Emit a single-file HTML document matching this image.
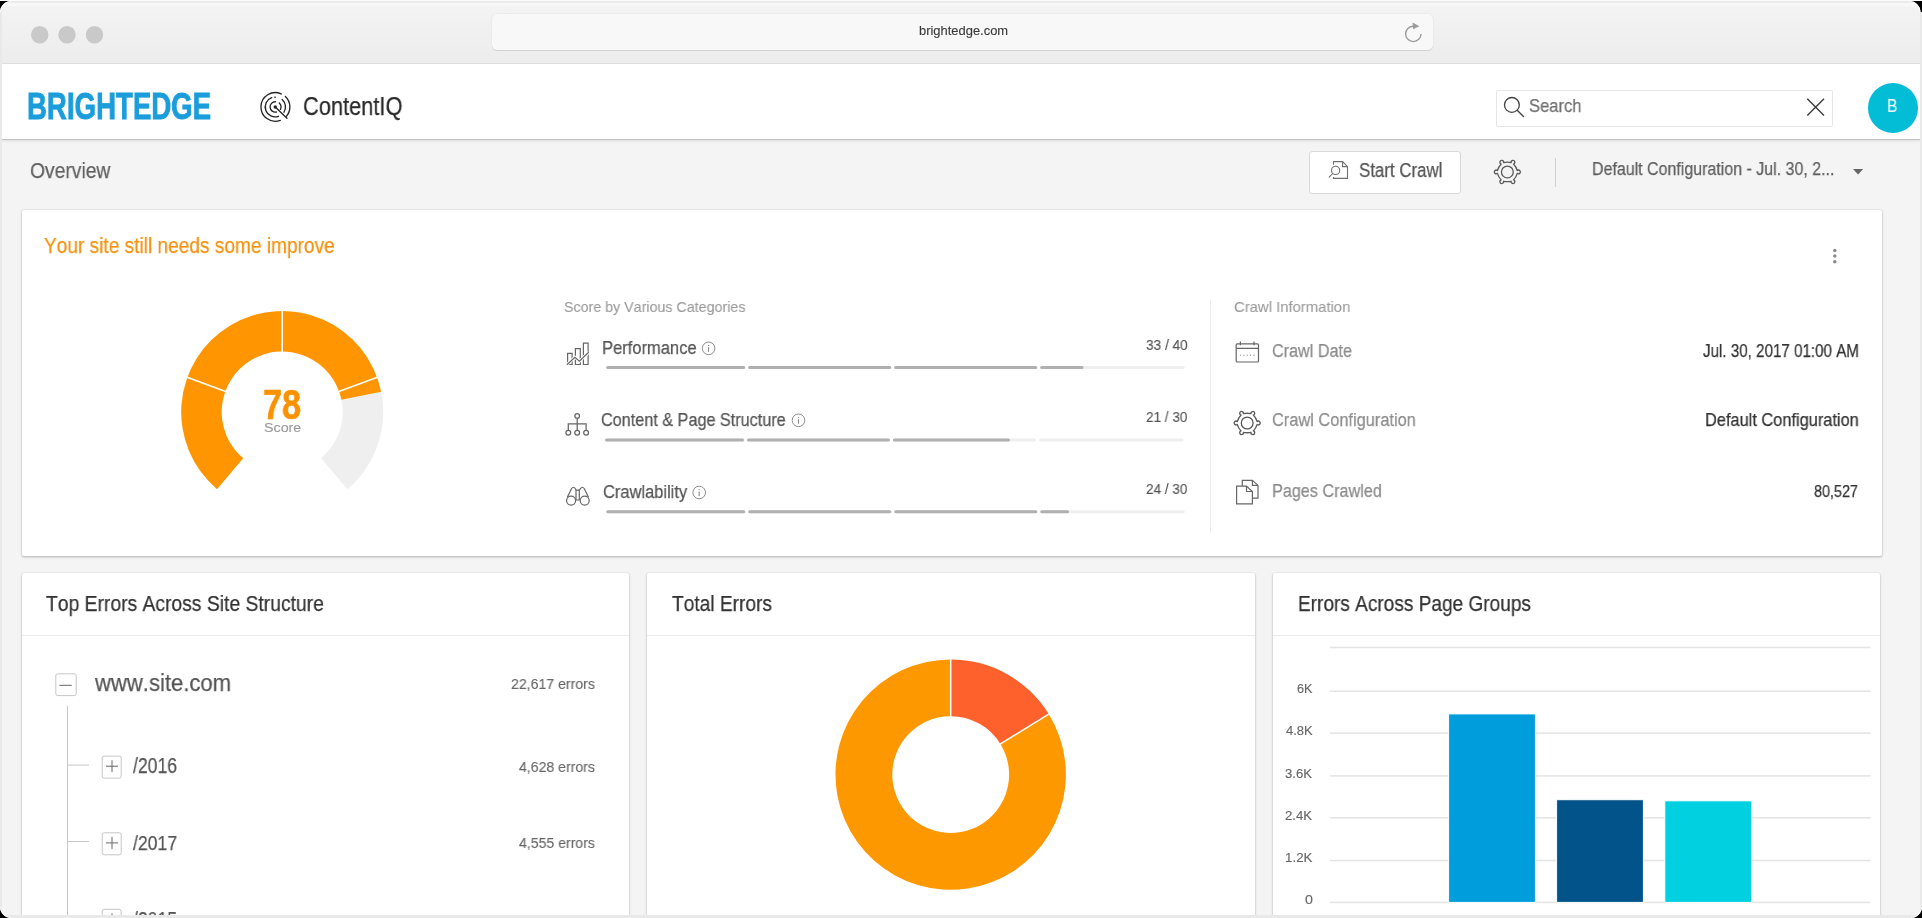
<!DOCTYPE html>
<html><head><meta charset="utf-8">
<style>
html,body{margin:0;padding:0;}
body{width:1922px;height:918px;overflow:hidden;position:relative;background:#000;font-family:"Liberation Sans",sans-serif;}
.a{position:absolute;}
.t{position:absolute;white-space:nowrap;line-height:1;transform-origin:0 0;will-change:transform;font-kerning:none;-webkit-text-stroke:0.25px currentColor;font-family:"Liberation Sans",sans-serif;}
#win{position:absolute;left:0;top:0;width:1922px;height:918px;background:#e9e9e9;overflow:hidden;}
.card{position:absolute;background:#fff;border-radius:2px;box-shadow:0 1px 2.5px rgba(0,0,0,0.26),0 0 1.5px rgba(0,0,0,0.12);}
svg{position:absolute;left:0;top:0;}
</style></head><body>
<div id="win">
  <!-- title bar -->
  <div class="a" style="left:1px;top:1px;width:1920px;height:63px;border-radius:10px 10px 0 0;background:linear-gradient(#f4f4f4,#ececec);"></div>
  <div class="a" style="left:1px;top:63px;width:1920px;height:1px;background:#dedede;"></div>
  <div class="a" style="left:0;top:1px;width:1922px;height:1.6px;background:#ebebeb;"></div>
  <div class="a" style="left:8px;top:3.2px;width:1906px;height:2.4px;background:#f8f8f8;"></div>
  <!-- url bar -->
  <div class="a" style="left:492px;top:14px;width:941px;height:36px;border-radius:5px;background:#f8f8f8;box-shadow:0 1px 0 #d2d2d2, 0 0 0 0.5px #e4e4e4;"></div>
  <!-- content bg -->
  <div class="a" style="left:2px;top:64px;width:1918px;height:851px;background:#f4f4f4;"></div>
  <!-- header -->
  <div class="a" style="left:2px;top:64px;width:1918px;height:75px;background:#fff;box-shadow:0 1px 0 #c2c2c2, 0 2px 3px rgba(0,0,0,0.10);"></div>
  <!-- search -->
  <div class="a" style="left:1496px;top:90px;width:335px;height:35px;border:1px solid #e6e6e6;border-radius:2px;background:#fff;"></div>
  <!-- avatar -->
  <div class="a" style="left:1868px;top:83.3px;width:50px;height:49.6px;border-radius:50%;background:#03bcd6;"></div>
  <!-- start crawl button -->
  <div class="a" style="left:1308.5px;top:150.5px;width:150px;height:41.5px;border:1px solid #d9d9d9;border-radius:3px;background:#fff;"></div>
  <!-- divider -->
  <div class="a" style="left:1554.5px;top:157.5px;width:1.2px;height:29.5px;background:#d0d0d0;"></div>
  <!-- cards -->
  <div class="card" style="left:22px;top:210px;width:1859.7px;height:345.6px;"></div>
  <div class="card" style="left:22px;top:573.3px;width:606.7px;height:400px;"></div>
  <div class="card" style="left:647px;top:573.3px;width:608.3px;height:400px;"></div>
  <div class="card" style="left:1273px;top:573.3px;width:607.2px;height:400px;"></div>
  <div class="a" style="left:22px;top:635px;width:606.7px;height:1px;background:#ebebeb;"></div>
  <div class="a" style="left:647px;top:635px;width:608.3px;height:1px;background:#ebebeb;"></div>
  <div class="a" style="left:1273px;top:635px;width:607.2px;height:1px;background:#ebebeb;"></div>
  <!-- card1 vertical divider -->
  <div class="a" style="left:1210.3px;top:300px;width:1px;height:233px;background:#ececec;"></div>

  <svg width="1922" height="918" viewBox="0 0 1922 918">
    <!-- traffic lights -->
    <circle cx="39.75" cy="34.75" r="8.75" fill="#c9c9c9"/>
    <circle cx="67" cy="34.75" r="8.75" fill="#c9c9c9"/>
    <circle cx="94.5" cy="34.75" r="8.75" fill="#c9c9c9"/>
    <!-- reload -->
    <path d="M1413.3 26.2 A7.7 7.7 0 1 0 1421 33.9" fill="none" stroke="#9b9b9b" stroke-width="1.4"/>
    <path d="M1412.5 22.5 L1419.4 26.2 L1413.2 29.2 Z" fill="#9b9b9b"/>
    <path d="M280.31 120.33 A14.30 14.30 0 1 1 281.21 93.95 M285.40 96.45 A14.60 14.60 0 0 1 286.61 116.14 M278.52 116.30 A9.90 9.90 0 0 1 271.73 97.70 M282.14 99.42 A10.20 10.20 0 0 1 283.97 112.26 M276.37 112.03 A5.20 5.20 0 1 1 275.47 101.75 M279.29 102.92 A5.70 5.70 0 0 1 280.40 109.41 M275.26 106.95 L286.96 118.25" fill="none" stroke="#242424" stroke-width="1.35" stroke-linecap="round"/><circle cx="275.26" cy="106.95" r="1.7" fill="#242424"/><path d="M274.83 97.16 A9.80 9.80 0 0 1 275.35 97.15" stroke="#242424" stroke-width="1.3" stroke-linecap="round"/>
    <!-- search icon -->
    <circle cx="1511.9" cy="104.9" r="7.4" fill="none" stroke="#444" stroke-width="1.3"/>
    <path d="M1517.2 110.2 L1523.5 116.5" stroke="#444" stroke-width="1.4" stroke-linecap="round"/>
    <!-- close x -->
    <path d="M1807.3 98.8 L1824 115.4 M1824 98.8 L1807.3 115.4" stroke="#3c3c3c" stroke-width="1.4"/>
    <!-- start crawl icon -->
    <g transform="translate(1324,156)" fill="none" stroke="#707070" stroke-width="1.1">
      <path d="M9.5 8.8 V5.6 H18.6 L23.5 10.6 V22.4 H9.5 V20.9"/>
      <path d="M18.6 5.6 V10.6 H23.5"/>
      <circle cx="11.6" cy="14.4" r="4.1"/>
      <path d="M8.6 17.5 L5.2 21.2" stroke-linecap="round"/>
    </g>
    <path d="M1517.30 173.33 A16 16 0 0 1 1513.51 179.90 A1.85 1.85 0 1 1 1511.14 181.26 A16 16 0 0 1 1503.56 181.26 A1.85 1.85 0 1 1 1501.19 179.90 A16 16 0 0 1 1497.40 173.33 A1.85 1.85 0 1 1 1497.40 170.59 A16 16 0 0 1 1501.19 164.02 A1.85 1.85 0 1 1 1503.56 162.66 A16 16 0 0 1 1511.14 162.66 A1.85 1.85 0 1 1 1513.51 164.02 A16 16 0 0 1 1517.30 170.59 A1.85 1.85 0 1 1 1517.30 173.33 Z" fill="none" stroke="#5a5a5a" stroke-width="1.30" stroke-linejoin="round"/><circle cx="1507.35" cy="171.96" r="5.90" fill="none" stroke="#5a5a5a" stroke-width="1.30"/>
    <!-- caret -->
    <path d="M1853 169 L1863.2 169 L1858.1 174.6 Z" fill="#666"/>
    <!-- kebab -->
    <circle cx="1834.8" cy="250.5" r="1.75" fill="#8a8a8a"/>
    <circle cx="1834.8" cy="256.1" r="1.75" fill="#8a8a8a"/>
    <circle cx="1834.8" cy="261.7" r="1.75" fill="#8a8a8a"/>
    <path d="M381.14 391.69 A101.00 101.00 0 0 1 347.39 489.14 L321.25 458.21 A60.50 60.50 0 0 0 341.46 399.83 Z" fill="#efefef"/>
<path d="M217.01 489.14 A101.00 101.00 0 1 1 381.14 391.69 L341.46 399.83 A60.50 60.50 0 1 0 243.15 458.21 Z" fill="#fe9501"/>
<path d="M226.29 391.65 L186.35 377.11" stroke="#fff" stroke-width="1.6"/>
<path d="M282.20 352.50 L282.20 310.00" stroke="#fff" stroke-width="1.6"/>
<path d="M338.11 391.65 L378.05 377.11" stroke="#fff" stroke-width="1.6"/>
    <!-- performance icon -->
    <g transform="translate(562,338)" fill="none" stroke="#666" stroke-width="1.2">
      <path d="M5.6 26.5 V15.3 H10.1 V26.5 Z M13.4 26.5 V10.6 H18.3 V26.5 Z M21.4 26.5 V5.2 H26.1 V26.5 Z"/>
      <path d="M4.9 26.7 L12.9 19.2 L17.4 23.2 L26.7 14.3" stroke="#fff" stroke-width="3"/>
      <path d="M4.9 26.7 L12.9 19.2 L17.4 23.2 L26.7 14.3"/>
    </g>
    <!-- sitemap icon -->
    <g transform="translate(561,410)" fill="none" stroke="#666" stroke-width="1.25">
      <circle cx="16.2" cy="5.9" r="2.3"/>
      <path d="M16.2 8.2 V20.4 M7.3 20.4 V13.9 H25.1 V20.4"/>
      <circle cx="7.3" cy="22.8" r="2.4"/>
      <circle cx="16.2" cy="22.8" r="2.4"/>
      <circle cx="25.1" cy="22.8" r="2.4"/>
    </g>
    <!-- binoculars icon -->
    <g transform="translate(561,480)" fill="none" stroke="#666" stroke-width="1.2">
      <circle cx="10.1" cy="20.6" r="4.5"/>
      <circle cx="23.7" cy="20.6" r="4.5"/>
      <path d="M6.3 17.2 L10.6 8.5 Q12.4 6 14.2 8.5 L15 10.1 V20.3"/>
      <path d="M27.5 17.2 L23.2 8.5 Q21.4 6 19.6 8.5 L18.3 10.1 V20.3"/>
      <path d="M15 10.1 H18.3 M15 20 H18.3"/>
    </g>
    <!-- info icons -->
    <g fill="none" stroke="#8c8c8c" stroke-width="1">
      <circle cx="708.6" cy="348.35" r="6.3"/>
      <circle cx="798.5" cy="420.3" r="6.3"/>
      <circle cx="699.2" cy="492.5" r="6.3"/>
    </g>
    <g stroke="#8c8c8c" stroke-width="1.1">
      <path d="M708.6 347.2 V351.8 M798.5 419.2 V423.8 M699.2 491.4 V496"/>
    </g>
    <g fill="#8c8c8c">
      <circle cx="708.6" cy="345.4" r="0.65"/>
      <circle cx="798.5" cy="417.4" r="0.65"/>
      <circle cx="699.2" cy="489.6" r="0.65"/>
    </g>
    <rect x="606.20" y="366.00" width="139.00" height="3" rx="1.5" fill="#efefef"/>
<rect x="606.20" y="366.00" width="139.00" height="3" rx="1.5" fill="#b0b0b0"/>
<rect x="748.20" y="366.00" width="143.00" height="3" rx="1.5" fill="#efefef"/>
<rect x="748.20" y="366.00" width="143.00" height="3" rx="1.5" fill="#b0b0b0"/>
<rect x="894.20" y="366.00" width="143.00" height="3" rx="1.5" fill="#efefef"/>
<rect x="894.20" y="366.00" width="143.00" height="3" rx="1.5" fill="#b0b0b0"/>
<rect x="1040.20" y="366.00" width="144.50" height="3" rx="1.5" fill="#efefef"/>
<rect x="1040.20" y="366.00" width="43.26" height="3" rx="1.5" fill="#b0b0b0"/>
<rect x="605.00" y="438.50" width="139.00" height="3" rx="1.5" fill="#efefef"/>
<rect x="605.00" y="438.50" width="139.00" height="3" rx="1.5" fill="#b0b0b0"/>
<rect x="747.00" y="438.50" width="143.00" height="3" rx="1.5" fill="#efefef"/>
<rect x="747.00" y="438.50" width="143.00" height="3" rx="1.5" fill="#b0b0b0"/>
<rect x="893.00" y="438.50" width="143.00" height="3" rx="1.5" fill="#efefef"/>
<rect x="893.00" y="438.50" width="116.95" height="3" rx="1.5" fill="#b0b0b0"/>
<rect x="1039.00" y="438.50" width="144.50" height="3" rx="1.5" fill="#efefef"/>
<rect x="606.30" y="510.30" width="139.00" height="3" rx="1.5" fill="#efefef"/>
<rect x="606.30" y="510.30" width="139.00" height="3" rx="1.5" fill="#b0b0b0"/>
<rect x="748.30" y="510.30" width="143.00" height="3" rx="1.5" fill="#efefef"/>
<rect x="748.30" y="510.30" width="143.00" height="3" rx="1.5" fill="#b0b0b0"/>
<rect x="894.30" y="510.30" width="143.00" height="3" rx="1.5" fill="#efefef"/>
<rect x="894.30" y="510.30" width="143.00" height="3" rx="1.5" fill="#b0b0b0"/>
<rect x="1040.30" y="510.30" width="144.50" height="3" rx="1.5" fill="#efefef"/>
<rect x="1040.30" y="510.30" width="28.80" height="3" rx="1.5" fill="#b0b0b0"/>
    <!-- calendar -->
    <g transform="translate(1232,336)" fill="none" stroke="#666" stroke-width="1.2">
      <rect x="4.2" y="7.8" width="22.3" height="18.2" rx="1"/>
      <path d="M4.2 12.4 H26.5 M8.4 5.4 V9.2 M22 5.4 V9.2"/>
    </g>
    <g fill="#777">
      <rect x="1239.9" y="354.7" width="1" height="1"/><rect x="1243.4" y="354.7" width="1" height="1"/><rect x="1246.8" y="354.7" width="1" height="1"/><rect x="1250.1" y="354.7" width="1" height="1"/><rect x="1253.5" y="354.7" width="1" height="1"/>
    </g>
    <path d="M1257.15 424.37 A16 16 0 0 1 1253.36 430.94 A1.85 1.85 0 1 1 1250.99 432.30 A16 16 0 0 1 1243.41 432.30 A1.85 1.85 0 1 1 1241.04 430.94 A16 16 0 0 1 1237.25 424.37 A1.85 1.85 0 1 1 1237.25 421.63 A16 16 0 0 1 1241.04 415.06 A1.85 1.85 0 1 1 1243.41 413.70 A16 16 0 0 1 1250.99 413.70 A1.85 1.85 0 1 1 1253.36 415.06 A16 16 0 0 1 1257.15 421.63 A1.85 1.85 0 1 1 1257.15 424.37 Z" fill="none" stroke="#5a5a5a" stroke-width="1.30" stroke-linejoin="round"/><circle cx="1247.20" cy="423.00" r="5.90" fill="none" stroke="#5a5a5a" stroke-width="1.30"/>
    <!-- pages -->
    <g transform="translate(1231,476)" fill="none" stroke="#666" stroke-width="1.2">
      <path d="M11.3 10.1 V4.4 H21.4 L27 9.4 V22.1 H21.4"/>
      <path d="M21.4 4.4 V9.4 H27"/>
      <path d="M5.6 10.1 H15.5 L21.4 15.5 V27.9 H5.6 Z"/>
      <path d="M15.5 10.1 V15.5 H21.4"/>
    </g>
    <!-- tree -->
    <g fill="none" stroke="#c6c6c6" stroke-width="1">
      <rect x="55.8" y="673.8" width="20.4" height="21.8" rx="2"/>
      <rect x="102.2" y="756.1" width="19" height="22" rx="2"/>
      <rect x="102.2" y="832.8" width="19" height="22" rx="2"/>
      <rect x="102.2" y="909.3" width="19" height="22" rx="2"/>
      <path d="M67.5 706 V918 M67.5 765.1 H89 M67.5 841.5 H89"/>
    </g>
    <g stroke="#666" stroke-width="1">
      <path d="M59.4 685.3 H71.7"/>
      <path d="M106 766.2 H118 M112 760.2 V772.2"/>
      <path d="M106 842.9 H118 M112 836.9 V848.9"/>
      <path d="M106 919.4 H118 M112 913.4 V925.4"/>
    </g>
    <path d="M1048.71 714.07 A115.20 115.20 0 1 1 950.70 659.40 L950.70 716.20 A58.40 58.40 0 1 0 1000.39 743.91 Z" fill="#fe9801"/>
<path d="M950.70 659.40 A115.20 115.20 0 0 1 1048.71 714.07 L1000.39 743.91 A58.40 58.40 0 0 0 950.70 716.20 Z" fill="#fe612b"/>
<path d="M950.70 717.20 L950.70 658.40" stroke="#fff" stroke-width="1.5"/>
<path d="M999.54 744.44 L1049.56 713.54" stroke="#fff" stroke-width="1.5"/>
    <rect x="1330" y="646.75" width="540.6" height="1.5" fill="#e4e4e4"/>
<rect x="1330" y="690.45" width="540.6" height="1.5" fill="#e4e4e4"/>
<rect x="1330" y="732.45" width="540.6" height="1.5" fill="#e4e4e4"/>
<rect x="1330" y="775.15" width="540.6" height="1.5" fill="#e4e4e4"/>
<rect x="1330" y="817.05" width="540.6" height="1.5" fill="#e4e4e4"/>
<rect x="1330" y="859.75" width="540.6" height="1.5" fill="#e4e4e4"/>
<rect x="1330" y="901.65" width="540.6" height="1.5" fill="#e4e4e4"/>
<rect x="1448.60" y="713.90" width="86.80" height="188.50" fill="#009ddd" stroke="#fff" stroke-width="1"/>
<rect x="1556.60" y="799.70" width="86.80" height="102.70" fill="#02538a" stroke="#fff" stroke-width="1"/>
<rect x="1664.80" y="800.80" width="86.80" height="101.60" fill="#00d0e0" stroke="#fff" stroke-width="1"/>
  </svg>
  <div class="t" style="left:918.57px;top:24.62px;font-size:12.14px;color:#3a3a3a;transform:scaleX(1.0666);-webkit-text-stroke:0.12px currentColor;">brightedge.com</div>
<div class="t" style="left:27.45px;top:87.65px;font-size:37.50px;color:#1b9ddb;font-weight:bold;transform:scaleX(0.7365);-webkit-text-stroke:0.9px #1b9ddb;">BRIGHTEDGE</div>
<div class="t" style="left:303.09px;top:92.75px;font-size:26.16px;color:#2a2a2a;transform:scaleX(0.8340);">ContentIQ</div>
<div class="t" style="left:1528.85px;top:96.64px;font-size:18.68px;color:#6f6f6f;transform:scaleX(0.8868);">Search</div>
<div class="t" style="left:1887.02px;top:96.72px;font-size:18.17px;color:#ffffff;transform:scaleX(0.8583);-webkit-text-stroke:0;">B</div>
<div class="t" style="left:30.09px;top:158.90px;font-size:22.67px;color:#616161;transform:scaleX(0.8515);">Overview</div>
<div class="t" style="left:1358.83px;top:160.67px;font-size:19.40px;color:#555555;transform:scaleX(0.8707);">Start Crawl</div>
<div class="t" style="left:1592.19px;top:159.65px;font-size:18.90px;color:#5e5e5e;transform:scaleX(0.8453);">Default Configuration - Jul. 30, 2...</div>
<div class="t" style="left:43.78px;top:234.84px;font-size:21.80px;color:#f5920f;transform:scaleX(0.8758);">Your site still needs some improve</div>
<div class="t" style="left:263.43px;top:383.76px;font-size:41.98px;color:#fa9200;font-weight:bold;transform:scaleX(0.8166);-webkit-text-stroke:0.6px #fa9200;">78</div>
<div class="t" style="left:264.05px;top:420.68px;font-size:13.37px;color:#9a9a9a;transform:scaleX(1.0673);-webkit-text-stroke:0.12px currentColor;">Score</div>
<div class="t" style="left:564.10px;top:299.05px;font-size:15.41px;color:#9b9b9b;transform:scaleX(0.9251);-webkit-text-stroke:0.12px currentColor;">Score by Various Categories</div>
<div class="t" style="left:602.39px;top:338.69px;font-size:18.68px;color:#555555;transform:scaleX(0.8847);">Performance</div>
<div class="t" style="left:601.48px;top:410.57px;font-size:18.46px;color:#555555;transform:scaleX(0.8792);">Content &amp; Page Structure</div>
<div class="t" style="left:602.86px;top:482.62px;font-size:18.75px;color:#555555;transform:scaleX(0.8781);">Crawlability</div>
<div class="t" style="left:1145.58px;top:336.96px;font-size:15.04px;color:#555555;transform:scaleX(0.9076);-webkit-text-stroke:0.12px currentColor;">33 / 40</div>
<div class="t" style="left:1145.82px;top:409.73px;font-size:14.61px;color:#555555;transform:scaleX(0.9266);-webkit-text-stroke:0.12px currentColor;">21 / 30</div>
<div class="t" style="left:1145.82px;top:481.79px;font-size:14.18px;color:#555555;transform:scaleX(0.9547);-webkit-text-stroke:0.12px currentColor;">24 / 30</div>
<div class="t" style="left:1233.65px;top:299.05px;font-size:15.41px;color:#9b9b9b;transform:scaleX(0.9635);-webkit-text-stroke:0.12px currentColor;">Crawl Information</div>
<div class="t" style="left:1272.28px;top:341.64px;font-size:18.68px;color:#8c8c8c;transform:scaleX(0.8654);">Crawl Date</div>
<div class="t" style="left:1272.27px;top:410.06px;font-size:19.19px;color:#8c8c8c;transform:scaleX(0.8534);">Crawl Configuration</div>
<div class="t" style="left:1271.77px;top:481.69px;font-size:18.31px;color:#8c8c8c;transform:scaleX(0.8847);">Pages Crawled</div>
<div class="t" style="left:1702.66px;top:342.66px;font-size:17.88px;color:#333333;transform:scaleX(0.8489);">Jul. 30, 2017 01:00 AM</div>
<div class="t" style="left:1704.66px;top:411.69px;font-size:17.73px;color:#333333;transform:scaleX(0.9239);">Default Configuration</div>
<div class="t" style="left:1814.28px;top:483.59px;font-size:16.91px;color:#333333;transform:scaleX(0.8499);">80,527</div>
<div class="t" style="left:45.77px;top:592.51px;font-size:22.02px;color:#333333;transform:scaleX(0.8768);">Top Errors Across Site Structure</div>
<div class="t" style="left:671.57px;top:592.72px;font-size:22.53px;color:#333333;transform:scaleX(0.8509);">Total Errors</div>
<div class="t" style="left:1297.54px;top:593.03px;font-size:21.87px;color:#333333;transform:scaleX(0.8717);">Errors Across Page Groups</div>
<div class="t" style="left:94.63px;top:671.37px;font-size:24.61px;color:#555555;transform:scaleX(0.8966);">www.site.com</div>
<div class="t" style="left:511.29px;top:676.57px;font-size:14.68px;color:#666666;transform:scaleX(0.9608);-webkit-text-stroke:0.12px currentColor;">22,617 errors</div>
<div class="t" style="left:133.20px;top:755.63px;font-size:21.35px;color:#555555;transform:scaleX(0.8251);">/2016</div>
<div class="t" style="left:519.08px;top:759.16px;font-size:15.04px;color:#666666;transform:scaleX(0.9362);-webkit-text-stroke:0.12px currentColor;">4,628 errors</div>
<div class="t" style="left:133.20px;top:832.51px;font-size:20.77px;color:#555555;transform:scaleX(0.8500);">/2017</div>
<div class="t" style="left:519.08px;top:835.88px;font-size:14.90px;color:#666666;transform:scaleX(0.9452);-webkit-text-stroke:0.12px currentColor;">4,555 errors</div>
<div class="t" style="left:133.20px;top:909.63px;font-size:21.35px;color:#555555;transform:scaleX(0.8244);">/2015</div>
<div class="t" style="left:518.86px;top:912.36px;font-size:15.04px;color:#666666;transform:scaleX(0.9389);-webkit-text-stroke:0.12px currentColor;">3,447 errors</div>
<div class="t" style="left:1296.86px;top:682.65px;font-size:12.46px;color:#666666;transform:scaleX(1.0157);-webkit-text-stroke:0.12px currentColor;">6K</div>
<div class="t" style="left:1285.60px;top:724.75px;font-size:12.46px;color:#666666;transform:scaleX(1.0431);-webkit-text-stroke:0.12px currentColor;">4.8K</div>
<div class="t" style="left:1285.40px;top:767.65px;font-size:12.46px;color:#666666;transform:scaleX(1.0509);-webkit-text-stroke:0.12px currentColor;">3.6K</div>
<div class="t" style="left:1285.24px;top:809.55px;font-size:12.46px;color:#666666;transform:scaleX(1.0573);-webkit-text-stroke:0.12px currentColor;">2.4K</div>
<div class="t" style="left:1284.88px;top:851.85px;font-size:12.46px;color:#666666;transform:scaleX(1.0712);-webkit-text-stroke:0.12px currentColor;">1.2K</div>
<div class="t" style="left:1304.84px;top:893.55px;font-size:12.46px;color:#666666;transform:scaleX(1.1413);-webkit-text-stroke:0.12px currentColor;">0</div>
  <!-- bottom window edge -->
  <div class="a" style="left:0;top:915px;width:1922px;height:3px;background:#e9e9e9;"></div>
  <div class="a" style="left:0;top:0;width:2px;height:918px;background:#e9e9e9;"></div>
  <div class="a" style="left:1920px;top:0;width:2px;height:918px;background:#e9e9e9;"></div>
  <svg width="1922" height="918" viewBox="0 0 1922 918" style="position:absolute;left:0;top:0">
    <rect x="0" y="0" width="1922" height="1" fill="#fbfbfb"/>
    <path d="M0 1 L11 1 A11 11 0 0 0 0 12 Z" fill="#000"/>
    <path d="M1909.5 1 L1922 1 L1922 12 L1920.5 12 A11 11 0 0 0 1909.5 1 Z" fill="#000"/>
    <path d="M0 907 A11 11 0 0 0 11 918 L0 918 Z" fill="#000"/>
    <path d="M1922 907 L1922 918 L1911 918 A11 11 0 0 0 1922 907 Z" fill="#000"/>
    <path d="M11 1.5 A10.5 10.5 0 0 0 0.5 12 M1920 12 A10.5 10.5 0 0 0 1909.5 1.5 M0.5 907 A10.5 10.5 0 0 0 11 917.5 M1911 917.5 A10.5 10.5 0 0 0 1921.5 907" fill="none" stroke="#fff" stroke-width="1"/>
  </svg>
</div>
</body></html>
